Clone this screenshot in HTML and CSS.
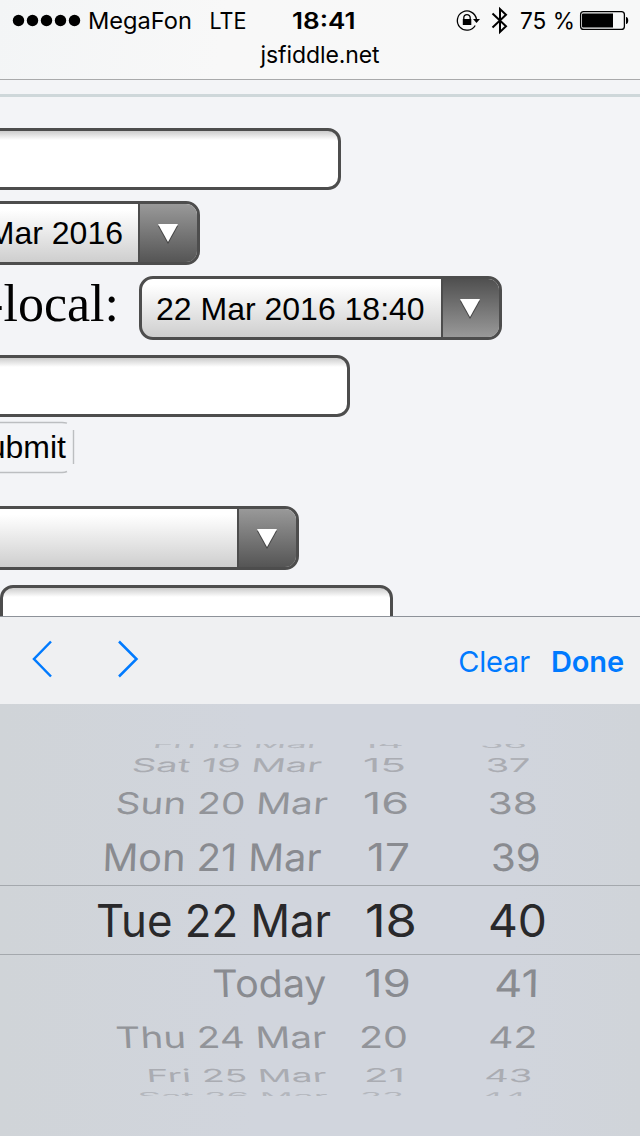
FILE: index.html
```html
<!DOCTYPE html>
<html lang="en">
<head>
<meta charset="utf-8">
<title>jsfiddle.net</title>
<link rel="stylesheet" href="styles.css">
</head>
<body>
<header class="browser-bar">
  <svg class="status" width="640" height="42" viewBox="0 0 640 42">
    <g><circle cx="18.5" cy="20.5" r="5.7"/><circle cx="32.5" cy="20.5" r="5.7"/><circle cx="46.5" cy="20.5" r="5.7"/><circle cx="60.5" cy="20.5" r="5.7"/><circle cx="74.5" cy="20.5" r="5.7"/></g>
    <text x="88" y="29" textLength="104" lengthAdjust="spacingAndGlyphs">MegaFon</text>
    <text x="209.5" y="29" textLength="37" lengthAdjust="spacingAndGlyphs">LTE</text>
    <text class="strong" x="292" y="29" textLength="63.500" lengthAdjust="spacingAndGlyphs">18:41</text>
    <g class="line"><path d="M475.200 25.500A9.600 9.600 0 1 1 476.400 19"/><path d="M463.800 20v-2.200a3.200 3.200 0 0 1 6.400 0V20"/></g>
    <path d="M462.800 19h8.500v6h-8.500zM473 19h7l-3.500 4z"/>
    <path class="line bt" d="M492.500 13.500 506 26.300 500 32V9l6 5.700L492.500 27.500"/>
    <text x="520" y="29" textLength="55" lengthAdjust="spacingAndGlyphs">75 %</text>
    <rect class="line" x="580.600" y="11.600" width="43.800" height="17.800" rx="3"/>
    <path d="M583 13.500h30v14h-30a1 1 0 0 1-1-1v-12a1 1 0 0 1 1-1zM626 17c3 0 3 7 0 7z"/>
  </svg>
  <div class="address">jsfiddle.net</div>
</header>
<main class="page">
  <div class="rule"></div>
  <div class="field first"></div>
  <div class="control date"><span class="value">22 Mar 2016</span><span class="arrow"><svg width="22" height="22"><path class="shade" d="M1 3h20L11 21z"/><path d="M1 1h20L11 19z"/></svg></span></div>
  <div class="local-row">
    <span class="label">datetime-local:</span>
    <div class="control local"><span class="value">22 Mar 2016 18:40</span><span class="arrow flipped"><svg width="22" height="22"><path class="shade" d="M1 3h20L11 21z"/><path d="M1 1h20L11 19z"/></svg></span></div>
  </div>
  <div class="field second"></div>
  <div class="submit"><span>Submit</span><svg class="outline" width="76" height="54"><path d="M0 1.500H62Q65 1.500 67 2.200M73.500 9V43M0 51.500H62Q65 51.500 67 50.500"/></svg></div>
  <div class="control select"><span class="value"></span><span class="arrow"><svg width="22" height="22"><path class="shade" d="M1 3h20L11 21z"/><path d="M1 1h20L11 19z"/></svg></span></div>
  <div class="field third"></div>
</main>
<nav class="toolbar">
  <svg class="steps" width="110" height="40"><path d="M20 2.500 3 20 20 37.500M88 2.500 105.500 20 88 37.500"/></svg>
  <span class="clear">Clear</span><span class="done">Done</span>
</nav>
<section class="wheel">
  <svg class="row far top-edge" width="640" height="8" viewBox="0 744 640 8">
    <text transform="translate(152 748) skewX(-12) scale(1 .24)" textLength="168" lengthAdjust="spacingAndGlyphs">Fri 18 Mar</text>
    <text transform="translate(361 748) scale(1 .24)" textLength="43" lengthAdjust="spacingAndGlyphs">14</text>
    <text transform="translate(480 748) scale(1 .24)" textLength="47" lengthAdjust="spacingAndGlyphs">36</text>
  </svg>
  <svg class="row third-out" width="640" height="28" viewBox="0 752 640 28">
    <text transform="translate(131 772) skewX(-8) scale(1 .42)" textLength="190" lengthAdjust="spacingAndGlyphs">Sat 19 Mar</text>
    <text transform="translate(363 772) scale(1 .42)" textLength="43" lengthAdjust="spacingAndGlyphs">15</text>
    <text transform="translate(486 772) skewX(3) scale(1 .42)" textLength="45" lengthAdjust="spacingAndGlyphs">37</text>
  </svg>
  <svg class="row second-out" width="640" height="44" viewBox="0 780 640 44">
    <text transform="translate(115 814) skewX(-4) scale(1 .66)" textLength="212" lengthAdjust="spacingAndGlyphs">Sun 20 Mar</text>
    <text transform="translate(363 814) scale(1 .66)" textLength="46" lengthAdjust="spacingAndGlyphs">16</text>
    <text transform="translate(488 814) skewX(2) scale(1 .66)" textLength="50" lengthAdjust="spacingAndGlyphs">38</text>
  </svg>
  <svg class="row next" width="640" height="61" viewBox="0 824 640 61">
    <text transform="translate(102 871) skewX(-2) scale(1 .84)" textLength="219" lengthAdjust="spacingAndGlyphs">Mon 21 Mar</text>
    <text transform="translate(367 871) scale(1 .84)" textLength="43" lengthAdjust="spacingAndGlyphs">17</text>
    <text transform="translate(491 871) skewX(1) scale(1 .84)" textLength="50" lengthAdjust="spacingAndGlyphs">39</text>
  </svg>
  <svg class="row chosen" width="640" height="70" viewBox="0 885 640 70">
    <path d="M0 885.500H640M0 954.500H640"/>
    <text transform="translate(96 937)" textLength="235" lengthAdjust="spacingAndGlyphs">Tue 22 Mar</text>
    <text transform="translate(365 937)" textLength="52" lengthAdjust="spacingAndGlyphs">18</text>
    <text transform="translate(488 937)" textLength="59" lengthAdjust="spacingAndGlyphs">40</text>
  </svg>
  <svg class="row next" width="640" height="59" viewBox="0 955 640 59">
    <text transform="translate(213 997) skewX(2) scale(1 .84)" textLength="114" lengthAdjust="spacingAndGlyphs">Today</text>
    <text transform="translate(364 997) scale(1 .84)" textLength="47" lengthAdjust="spacingAndGlyphs">19</text>
    <text transform="translate(494 997) skewX(-1) scale(1 .84)" textLength="45" lengthAdjust="spacingAndGlyphs">41</text>
  </svg>
  <svg class="row second-out" width="640" height="46" viewBox="0 1014 640 46">
    <text transform="translate(116 1048) skewX(3) scale(1 .66)" textLength="211" lengthAdjust="spacingAndGlyphs">Thu 24 Mar</text>
    <text transform="translate(359 1048) scale(1 .66)" textLength="49" lengthAdjust="spacingAndGlyphs">20</text>
    <text transform="translate(488 1048) skewX(-2) scale(1 .66)" textLength="49" lengthAdjust="spacingAndGlyphs">42</text>
  </svg>
  <svg class="row third-out" width="640" height="28" viewBox="0 1060 640 28">
    <text transform="translate(147 1082) skewX(5) scale(1 .4)" textLength="180" lengthAdjust="spacingAndGlyphs">Fri 25 Mar</text>
    <text transform="translate(364 1082) scale(1 .4)" textLength="41" lengthAdjust="spacingAndGlyphs">21</text>
    <text transform="translate(484 1082) skewX(-4) scale(1 .4)" textLength="48" lengthAdjust="spacingAndGlyphs">43</text>
  </svg>
  <svg class="row far" width="640" height="8" viewBox="0 1088 640 8">
    <text transform="translate(138 1099.500) skewX(6) scale(1 .24)" textLength="190" lengthAdjust="spacingAndGlyphs">Sat 26 Mar</text>
    <text transform="translate(360 1099.500) scale(1 .24)" textLength="44" lengthAdjust="spacingAndGlyphs">22</text>
    <text transform="translate(480 1099.500) skewX(-6) scale(1 .24)" textLength="46" lengthAdjust="spacingAndGlyphs">44</text>
  </svg>
</section>
</body>
</html>
```
FILE: styles.css
```css
* { box-sizing: border-box; }
body {
  margin: 0;
  width: 640px;
  height: 1136px;
  overflow: hidden;
  display: flex;
  flex-direction: column;
  background: #f3f4f7;
  font-family: Inter, "Liberation Sans", sans-serif;
  color: #000;
}
svg { display: block; flex: none; }
.browser-bar {
  flex: none;
  height: 80px;
  background: linear-gradient(100deg, #f3f5f6, #f8f8f8 35%, #f7f8f8);
  border-bottom: 1px solid #a9aaab;
}
.status text { font-size: 23px; }
.status .strong { font-weight: 600; }
.line { fill: none; stroke: #000; stroke-width: 1.3; }
.bt { stroke-width: 2; }
.address {
  text-align: center;
  font-size: 23px;
  line-height: 28px;
  letter-spacing: -0.1px;
  margin-top: -1px;
}
.page { flex: none; height: 536px; overflow: hidden; }
.rule { height: 17px; border-bottom: 3px solid #ced7da; }
.field {
  height: 62px;
  border: 3px solid #4d4d4d;
  border-radius: 13px;
  background: linear-gradient(#ccc, #fff 9px);
}
.first { width: 381px; margin: 31px 0 0 -40px; }
.control {
  display: flex;
  height: 64px;
  border: 3px solid #4d4d4d;
  border-radius: 14px;
  overflow: hidden;
  background: linear-gradient(#fff 10%, #cecece);
  font: 32px/59px "Liberation Sans", Arial, sans-serif;
  white-space: nowrap;
}
.value { flex: 1; }
.arrow {
  flex: none;
  width: 59px;
  padding-right: 2px;
  border-left: 2px solid #4d4d4d;
  background: linear-gradient(#999, #555);
  display: flex;
  align-items: center;
  justify-content: center;
}
.arrow svg { fill: #fff; margin-top: 1px; }
.arrow .shade { fill: #444; }
.flipped { width: 58px; background: linear-gradient(#505050, #999); }
.date { width: 280px; margin: 11px 0 0 -80px; }
.date .value { text-align: right; padding-right: 15px; }
.local-row {
  display: flex;
  justify-content: flex-end;
  width: 502px;
  margin: 11px 0 0;
}
.label {
  font: 52px/55px "Liberation Serif", "Times New Roman", serif;
  white-space: nowrap;
  margin-right: 20px;
}
.local { flex: none; width: 363px; line-height: 61px; }
.local .value { padding-left: 14px; }
.second { width: 390px; margin: 15px 0 0 -40px; }
.submit {
  width: 76px;
  height: 54px;
  margin-top: 4px;
  display: grid;
  grid-template-columns: 76px;
  justify-items: end;
  font: 32px/53px "Liberation Sans", Arial, sans-serif;
}
.submit > * { grid-area: 1 / 1; }
.submit span { margin-right: 10px; }
.outline { fill: none; stroke: #bcbec1; stroke-width: 1.4; }
.select { width: 339px; margin: 31px 0 0 -40px; }
.third { width: 393px; margin-top: 15px; }
.toolbar {
  flex: none;
  height: 88px;
  border-top: 1px solid #8d9299;
  background: #eff0f2;
  display: flex;
  align-items: center;
  padding: 0 16px 0 31px;
  color: #007aff;
  font-size: 29px;
}
.steps { fill: none; stroke: #007aff; stroke-width: 2.5; margin-top: -3px; }
.clear { margin: 2px 21px 0 auto; letter-spacing: -.2px; }
.done { margin-top: 2px; font-weight: 600; letter-spacing: -.1px; }
.wheel {
  flex: 1;
  padding-top: 40px;
  background: linear-gradient(90deg, #d0d4d8, #d1d5dd 40%, #d1d5dd 80%, #d0d4d9);
}
.row { overflow: hidden; }
.row text { font-size: 45px; fill: #898b90; }
.row.second-out text { fill: #929499; }
.row.third-out text { fill: #aaacb2; }
.row.far text { fill: #b4b7bd; }
.row.chosen path { stroke: #a4a8ad; }
.row.chosen text { fill: #29292b; }
```
